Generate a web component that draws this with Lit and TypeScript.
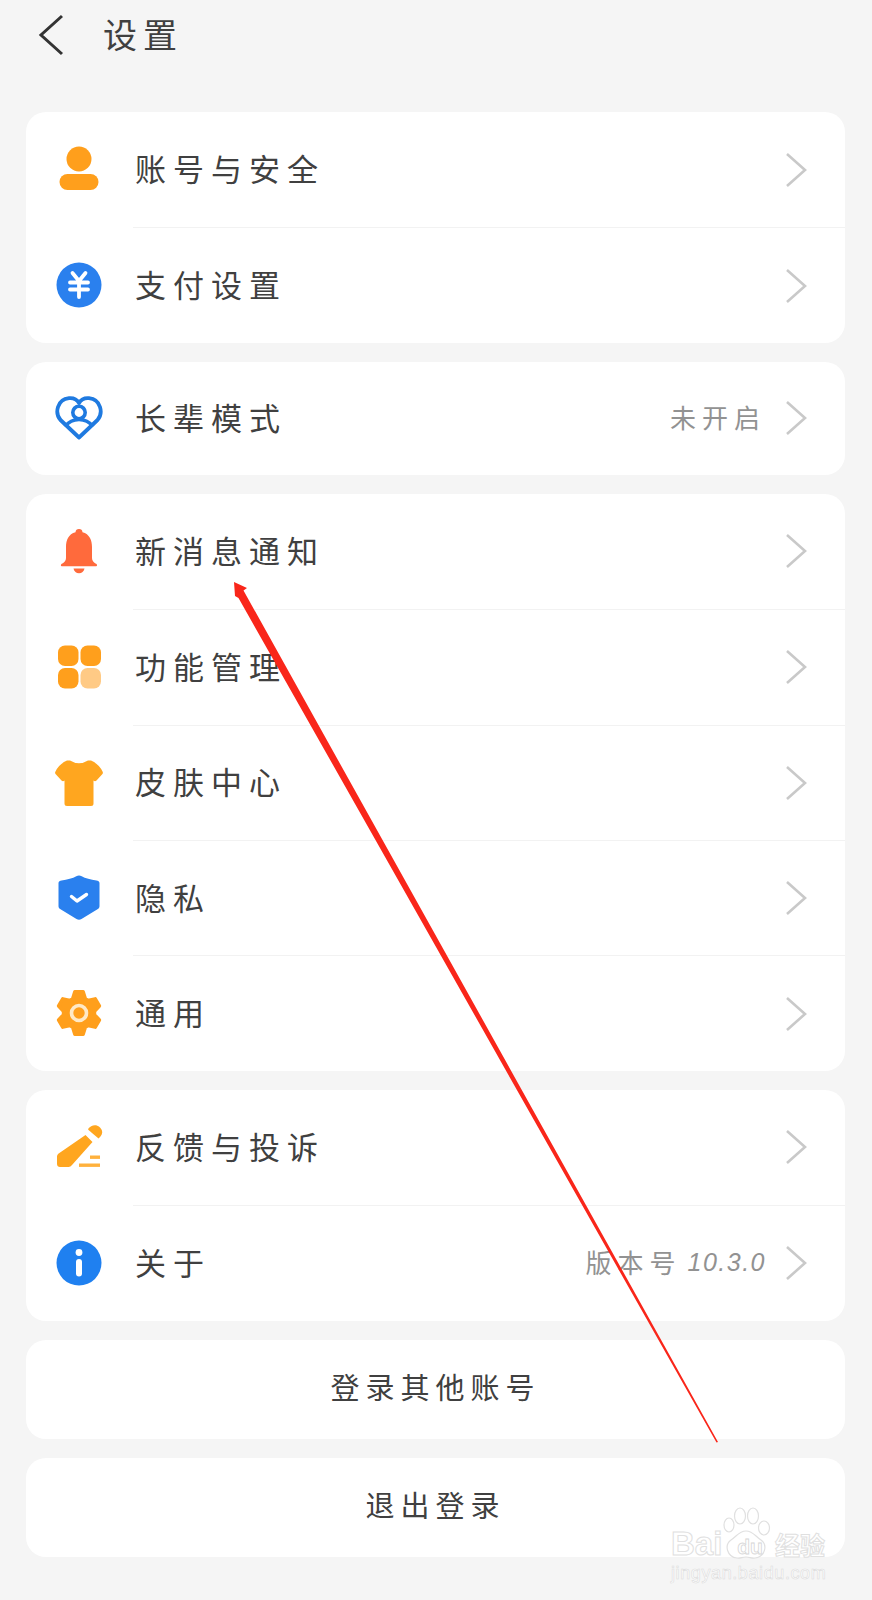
import { LitElement, html, css, svg, nothing } from "lit";
import { customElement } from "lit/decorators.js";

const O = "#ff9f1c";
const B = "#2a80ee";

function gearPath(): string {
  const pts: string[] = [];
  for (let i = 0; i < 6; i++) {
    const a = -90 + i * 60;
    const corners: [number, number][] = [
      [a - 24, 15.5],
      [a - 11, 21.5],
      [a + 11, 21.5],
      [a + 24, 15.5],
    ];
    for (const [deg, r] of corners) {
      const t = (deg * Math.PI) / 180;
      pts.push(`${(24 + r * Math.cos(t)).toFixed(2)} ${(24 + r * Math.sin(t)).toFixed(2)}`);
    }
  }
  return "M" + pts.join("L") + "z";
}

const icons: Record<string, unknown> = {
  person: svg`<circle cx="24" cy="13" r="12.500" fill="${O}"/><rect x="4.500" y="28" width="39" height="16" rx="8" fill="${O}"/>`,
  yuan: svg`<circle cx="24" cy="24" r="22.500" fill="${B}"/><path d="M17.500 12l6.500 8 6.500-8M15 21.500h18M15 28.500h18M24 20v16" fill="none" stroke="#fff" stroke-width="3.800" stroke-linecap="round" stroke-linejoin="round"/>`,
  heart: svg`<path d="M24 43.500 5.500 26C-.5 19 2 5.500 14 4.200c4.300-.4 8 1.400 10 4.800 2-3.400 5.700-5.200 10-4.800C46 5.500 48.500 19 42.500 26z" fill="none" stroke="#1f7ae0" stroke-width="3.800" stroke-linejoin="round"/><circle cx="24" cy="18.500" r="6.200" fill="none" stroke="#1f7ae0" stroke-width="3.600"/><path d="M10 32.500C13.500 28 18.500 25.500 24 25.500s10.500 2.500 14 7" fill="none" stroke="#1f7ae0" stroke-width="3.600"/>`,
  bell: svg`<path d="M24 2a3.500 3.500 0 0 1 3.500 3.200C34.500 7 37 13 37 20v11c0 2.500 1.500 4.500 3.500 5.500 2 .8 2.300 2.800 0 2.800h-33c-2.300 0-2-2-.1-2.800C9.500 35.500 11 33.500 11 31V20c0-7 2.500-13 9.500-14.800A3.500 3.500 0 0 1 24 2z" fill="#ff6a3c"/><path d="M18.500 41.500h11c-.5 3-2.800 4.800-5.500 4.800s-5-1.800-5.500-4.800z" fill="#ff6a3c"/>`,
  grid: svg`<rect x="3" y="2.500" width="20.500" height="20.500" rx="7" fill="${O}"/><rect x="25.500" y="2.500" width="20.500" height="20.500" rx="7" fill="${O}"/><rect x="3" y="25" width="20.500" height="20.500" rx="7" fill="${O}"/><rect x="25.500" y="25" width="20.500" height="20.500" rx="7" fill="#ffca85"/>`,
  shirt: svg`<path d="M15 2.500Q24 8 33 2.500L36 2.500Q44 6 47.500 13.500Q48.500 15 47 16.500L41.500 22.500Q40 24 38.500 22.500V45.500Q38.500 48 36 48H12Q9.500 48 9.500 45.500V22.500Q8 24 6.500 22.500L1 16.500Q-.500 15 .500 13.500Q4 6 12 2.500z" fill="#ffa61f"/>`,
  shield: svg`<path d="M24 1.500c1 0 1.800.3 2.700.8 3.500 2 9 3.500 14.800 4.200 1.500.2 3 .9 3 2.500V32c0 1.300-.5 2.300-1.600 3L26.500 45c-1.600 1-3.400 1-5 0L5.100 35C4 34.300 3.500 33.300 3.500 32V9c0-1.600 1.500-2.300 3-2.500C12.300 5.800 17.800 4.300 21.300 2.300c.9-.5 1.700-.8 2.700-.8z" fill="${B}"/><path d="M16.500 22.500l5.500 4.500 9.500-6.500" fill="none" stroke="#fff" stroke-width="3.400" stroke-linecap="round" stroke-linejoin="round"/>`,
  gear: svg`<path d="${gearPath()}" fill="${O}" stroke="${O}" stroke-width="3.600" stroke-linejoin="round"/><circle cx="24" cy="24" r="7.500" fill="none" stroke="#ffe9c6" stroke-width="3.600"/>`,
  pen: svg`<path d="M30.500 12 37.500 19 17 42c-1 1.300-2 2-3.500 2H5c-1.700 0-3-1.300-3-3v-7c0-1.300.4-2.300 1.300-3.200z" fill="#ffa61f"/><path d="M33 6c3-4 8-5 11.500-2s3.500 7 .5 10l-1.500 1.500L33.500 7z" fill="#ffa61f"/><rect x="35" y="32.500" width="10" height="3.400" fill="#ffb13c"/><rect x="24" y="40.500" width="21" height="3.400" fill="#ffb13c"/>`,
  info: svg`<circle cx="24" cy="24" r="22.500" fill="#1f80f0"/><circle cx="24" cy="13.500" r="3.400" fill="#fff"/><rect x="21" y="20" width="6" height="17.500" rx="3" fill="#fff"/>`,
};

type Row = { icon: string; label: string; value?: string; num?: string };

const groups: { rows: Row[]; short?: boolean }[] = [
  { rows: [{ icon: "person", label: "账号与安全" }, { icon: "yuan", label: "支付设置" }] },
  { short: true, rows: [{ icon: "heart", label: "长辈模式", value: "未开启" }] },
  {
    rows: [
      { icon: "bell", label: "新消息通知" },
      { icon: "grid", label: "功能管理" },
      { icon: "shirt", label: "皮肤中心" },
      { icon: "shield", label: "隐私" },
      { icon: "gear", label: "通用" },
    ],
  },
  {
    rows: [
      { icon: "pen", label: "反馈与投诉" },
      { icon: "info", label: "关于", value: "版本号", num: "10.3.0" },
    ],
  },
];

@customElement("app-root")
export class AppRoot extends LitElement {
  static styles = css`
    :host {
      display: block;
      position: relative;
      width: 872px;
      height: 1600px;
      overflow: hidden;
      background: #f5f5f5;
      color: #404040;
      font-family: "Noto Sans CJK SC", "Liberation Sans", sans-serif;
    }
    .header {
      display: flex;
      align-items: center;
      height: 70px;
      padding-left: 38px;
      gap: 39px;
    }
    .back {
      width: 26px;
      height: 42px;
      display: block;
    }
    .title {
      font-size: 34px;
      letter-spacing: 6px;
      line-height: 1;
      padding-bottom: 3px;
    }
    .stack {
      display: flex;
      flex-direction: column;
      gap: 19px;
      margin: 42px 27px 0 26px;
    }
    .card {
      background: #fff;
      border-radius: 20px;
      overflow: hidden;
    }
    .row {
      display: flex;
      align-items: stretch;
      height: 115.4px;
      padding-left: 29px;
    }
    .card.short .row {
      height: 113px;
    }
    .icon {
      width: 48px;
      height: 48px;
      flex: none;
      align-self: center;
      margin-right: 30px;
    }
    .body {
      flex: 1;
      display: flex;
      align-items: center;
      padding: 0 38px 0 2px;
      min-width: 0;
    }
    .row + .row .body {
      border-top: 1px solid #f2f2f2;
    }
    .label {
      flex: 1;
      font-size: 31px;
      letter-spacing: 7px;
      line-height: 1;
      padding-bottom: 4px;
    }
    .value {
      font-size: 26px;
      letter-spacing: 6px;
      color: #929292;
      margin-right: 19px;
      line-height: 1;
      padding-bottom: 2px;
      display: flex;
      align-items: center;
      gap: 6px;
    }
    .num {
      font-family: "Liberation Sans", sans-serif;
      font-style: italic;
      letter-spacing: 1.5px;
      font-size: 25px;
    }
    .chev {
      width: 22px;
      height: 36px;
      flex: none;
      display: block;
    }
    .btn {
      height: 99px;
      display: flex;
      align-items: center;
      justify-content: center;
      font-size: 29px;
      letter-spacing: 6px;
      padding-bottom: 6px;
      box-sizing: border-box;
    }
    .overlay {
      position: absolute;
      inset: 0;
      width: 872px;
      height: 1600px;
      pointer-events: none;
    }
    .wm {
      position: absolute;
      left: 671px;
      top: 1507px;
      width: 160px;
      height: 75px;
      pointer-events: none;
      color: #fff;
      -webkit-text-stroke: 1px #e0e0e0;
      font-family: "Liberation Sans", sans-serif;
    }
    .wm-top {
      position: relative;
      z-index: 1;
      display: flex;
      align-items: center;
      font-size: 33px;
      font-weight: 700;
      line-height: 34px;
      height: 34px;
      margin-top: 20px;
    }
    .wm-bai {
      width: 56px;
    }
    .wm-du {
      width: 46px;
      text-align: center;
      font-size: 21px;
      padding-top: 6px;
      -webkit-text-stroke: 0.8px #d6d6d6;
    }
    .wm-cn {
      font-family: "Noto Sans CJK SC", sans-serif;
      font-size: 25px;
      margin-left: 2px;
    }
    .wm-url {
      font-size: 18px;
      line-height: 20px;
      margin-top: 2px;
      -webkit-text-stroke: 0.6px #dcdcdc;
      letter-spacing: 0.6px;
      white-space: nowrap;
    }
    .paw {
      position: absolute;
      left: 52px;
      top: 0;
      width: 52px;
      height: 56px;
    }
  `;

  private rowTpl(r: Row) {
    return html`<div class="row">
      <svg class="icon" viewBox="0 0 48 48">${icons[r.icon]}</svg>
      <div class="body">
        <span class="label">${r.label}</span>
        ${r.value
          ? html`<span class="value"
              >${r.value}${r.num ? html`<span class="num">${r.num}</span>` : nothing}</span
            >`
          : nothing}
        <svg class="chev" viewBox="0 0 22 36">
          <path d="M2 2l18 16L2 34" fill="none" stroke="#c9c9c9" stroke-width="2.600" />
        </svg>
      </div>
    </div>`;
  }

  render() {
    return html`
      <div class="header">
        <svg class="back" viewBox="0 0 26 42">
          <path d="M24 2 3 21l21 19" fill="none" stroke="#333" stroke-width="3" />
        </svg>
        <span class="title">设置</span>
      </div>
      <div class="stack">
        ${groups.map(
          (g) => html`<div class="card ${g.short ? "short" : ""}">${g.rows.map((r) => this.rowTpl(r))}</div>`
        )}
        <div class="card btn">登录其他账号</div>
        <div class="card btn">退出登录</div>
      </div>
      <svg class="overlay" viewBox="0 0 872 1600">
        <path
          d="M234 582 247 588 243.500 590.500 718 1442 716.500 1442.500 238.500 598 235 596z"
          fill="#f9261a"
        />
      </svg>
      <div class="wm">
        <svg class="paw" viewBox="0 0 52 56">
          <g fill="#fff" stroke="#e0e0e0" stroke-width="1.200">
            <ellipse cx="6" cy="18" rx="5" ry="7" />
            <ellipse cx="17" cy="9" rx="5.500" ry="8" />
            <ellipse cx="30" cy="9" rx="5.500" ry="8" />
            <ellipse cx="41" cy="21" rx="5.500" ry="7" />
            <path d="M23 24c7 0 9 5 15 9 7 5 4 17-6 18-4 .4-5-1-9-1s-5 1.400-9 1C4 50 1 38 8 33c6-4 8-9 15-9z" />
          </g>
        </svg>
        <div class="wm-top">
          <span class="wm-bai">Bai</span><span class="wm-du">du</span><span class="wm-cn">经验</span>
        </div>
        <div class="wm-url">jingyan.baidu.com</div>
      </div>
    `;
  }
}
